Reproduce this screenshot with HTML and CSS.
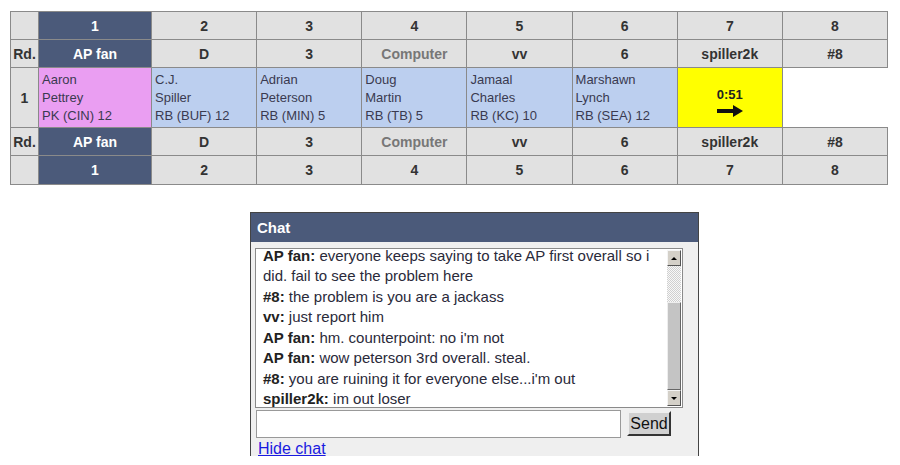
FILE: index.html
```html
<!DOCTYPE html>
<html lang="en">
<head>
  <meta charset="UTF-8">
  <title>Draft</title>
  <link rel="stylesheet" href="styles.css">
</head>
<body>
  <table class="board">
    <colgroup>
      <col class="c-rd"><col class="c-first"><col><col><col><col><col><col><col>
    </colgroup>
    <tr class="hdr">
      <td></td><td class="on">1</td><td>2</td><td>3</td><td>4</td><td>5</td><td>6</td><td>7</td><td>8</td>
    </tr>
    <tr class="hdr">
      <td>Rd.</td><td class="on">AP fan</td><td>D</td><td>3</td><td class="cpu">Computer</td><td>vv</td><td>6</td><td>spiller2k</td><td>#8</td>
    </tr>
    <tr class="picks">
      <td class="rd">1</td>
      <td class="pick pk">Aaron<br>Pettrey<br>PK (CIN) 12</td>
      <td class="pick rb">C.J.<br>Spiller<br>RB (BUF) 12</td>
      <td class="pick rb">Adrian<br>Peterson<br>RB (MIN) 5</td>
      <td class="pick rb">Doug<br>Martin<br>RB (TB) 5</td>
      <td class="pick rb">Jamaal<br>Charles<br>RB (KC) 10</td>
      <td class="pick rb">Marshawn<br>Lynch<br>RB (SEA) 12</td>
      <td class="clock">
        <div class="time">0:51</div>
        <svg class="arrow" width="26" height="12" viewBox="0 0 26 12"><path d="M0 4h16V0l10 6-10 6V8H0z" fill="#111"/></svg>
      </td>
      <td class="empty"></td>
    </tr>
    <tr class="hdr">
      <td>Rd.</td><td class="on">AP fan</td><td>D</td><td>3</td><td class="cpu">Computer</td><td>vv</td><td>6</td><td>spiller2k</td><td>#8</td>
    </tr>
    <tr class="hdr last">
      <td></td><td class="on">1</td><td>2</td><td>3</td><td>4</td><td>5</td><td>6</td><td>7</td><td>8</td>
    </tr>
  </table>

  <div class="chat">
    <div class="chat-title">Chat</div>
    <div class="chat-body">
      <div class="log">
        <div class="log-text">
          <div class="lines">
            <p><b>AP fan:</b> everyone keeps saying to take AP first overall so i did. fail to see the problem here</p>
            <p><b>#8:</b> the problem is you are a jackass</p>
            <p><b>vv:</b> just report him</p>
            <p><b>AP fan:</b> hm. counterpoint: no i'm not</p>
            <p><b>AP fan:</b> wow peterson 3rd overall. steal.</p>
            <p><b>#8:</b> you are ruining it for everyone else...i'm out</p>
            <p><b>spiller2k:</b> im out loser</p>
          </div>
        </div>
        <div class="scrollbar">
          <div class="sb-btn"><span class="tri up"></span></div>
          <div class="sb-track"></div>
          <div class="sb-thumb"></div>
          <div class="sb-btn"><span class="tri down"></span></div>
        </div>
      </div>
      <div class="send-row">
        <input type="text" class="msg">
        <button class="send">Send</button>
      </div>
      <a href="#" class="hide">Hide chat</a>
    </div>
  </div>
</body>
</html>
```

FILE: styles.css
```css
body {
  margin: 0;
  padding: 11px 10px 0;
  font-family: "Liberation Sans", Arial, sans-serif;
  background: #fff;
}
.board {
  border-collapse: collapse;
  table-layout: fixed;
  width: 878px;
  font-size: 14px;
}
.c-rd { width: 28px; }
.c-first { width: 113px; }
.board td {
  border: 1px solid #8a8a8a;
  padding: 0;
  text-align: center;
  color: #333;
  font-weight: bold;
}
.hdr td {
  background: #e1e1e1;
  height: 27px;
}
.hdr.last td { height: 28px; }
.hdr td.on {
  background: #4b5a7a;
  color: #fff;
}
.hdr td.cpu { color: #777; }
.picks td { height: 59px; }
.picks td.rd { background: #e1e1e1; }
.board td.pick {
  text-align: left;
  vertical-align: middle;
  font-weight: normal;
  font-size: 13px;
  color: #3a3a50;
  line-height: 18px;
  padding-left: 3px;
}
.pick.pk { background: #ea9ef2; }
.pick.rb { background: #bccfef; }
.picks td.clock {
  background: #ffff00;
  height: 49px;
  padding-top: 10px;
  font-size: 13px;
  color: #222;
}
.clock .time { line-height: 14px; }
.clock .arrow { display: block; margin: 3px auto 0; }
.board td.empty {
  border: none;
  background: #fff;
}

.chat {
  width: 447px;
  margin: 27px 0 0 240px;
  border-left: 1px solid #444;
  border-top: 1px solid #444;
  border-right: 1px solid #444;
}
.chat-title {
  background: #4b5a7a;
  color: #fff;
  font-weight: bold;
  font-size: 15px;
  height: 29px;
  line-height: 29px;
  padding-left: 6px;
}
.chat-body {
  background: #efefef;
  padding: 6px 0 0 4px;
  height: 208px;
}
.log {
  display: flex;
  width: 426px;
  height: 158px;
  border: 1px solid #8a8a8a;
  background: #fff;
}
.log-text {
  flex: 1;
  overflow: hidden;
  padding-left: 7px;
}
.lines { margin-top: -3.5px; }
.lines p {
  margin: 0;
  font-size: 15px;
  line-height: 20.5px;
  color: #2a2a3a;
}
.lines b { color: #222; }
.scrollbar {
  width: 14px;
  margin: 1px 1px 1px 0;
  display: flex;
  flex-direction: column;
}
.sb-btn {
  height: 16px;
  background: #d4d0c8;
  border: 1px solid;
  border-color: #f4f4f4 #555 #555 #f4f4f4;
  box-sizing: border-box;
  display: flex;
  align-items: center;
  justify-content: center;
}
.tri {
  width: 0;
  height: 0;
  border-left: 3px solid transparent;
  border-right: 3px solid transparent;
}
.tri.up { border-bottom: 3px solid #000; }
.tri.down { border-top: 3px solid #000; }
.sb-track {
  height: 36px;
  background-color: #f4f4f4;
  background-image: repeating-conic-gradient(#d0d0d0 0 25%, #f8f8f8 0 50%);
  background-size: 2px 2px;
}
.sb-thumb {
  flex: 1;
  background: #c4c4c4;
  border: 1px solid;
  border-color: #eee #666 #666 #eee;
}
.send-row {
  display: flex;
  align-items: flex-start;
  margin-top: 2px;
}
.msg {
  width: 365px;
  height: 28px;
  box-sizing: border-box;
  border: 1px solid #999;
  margin: 0 0 0 1px;
  padding: 0;
  background: #fff;
}
.send {
  margin: 1px 0 0 6px;
  width: 44px;
  height: 25px;
  padding: 0;
  font-family: "Liberation Sans", Arial, sans-serif;
  font-size: 16px;
  color: #111;
  background: #d0d0d0;
  border: 2px solid;
  border-color: #eee #333 #333 #eee;
}
.hide {
  display: inline-block;
  margin: 2px 0 0 3px;
  font-size: 16px;
  line-height: 18px;
  color: #1a1ae0;
}
```
